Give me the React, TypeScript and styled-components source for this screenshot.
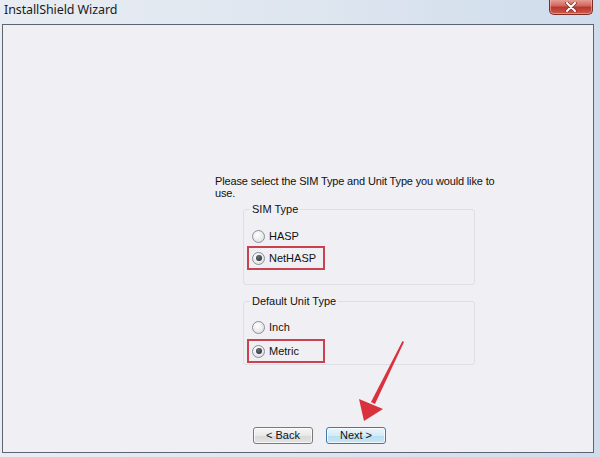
import React from "react";
import styled, { createGlobalStyle } from "styled-components";

const Global = createGlobalStyle`
  html, body { margin: 0; padding: 0; }
  body { width: 600px; height: 457px; overflow: hidden; background: #dfe6ef; }
`;

const Window = styled.div`
  position: relative;
  width: 600px;
  height: 457px;
  display: flex;
  flex-direction: column;
  background: linear-gradient(90deg, #e9edf3 0%, #dde5ef 55%, #cfdcec 100%);
  box-sizing: border-box;
`;

const TitleBar = styled.div`
  height: 24px;
  flex: none;
  display: flex;
  align-items: flex-start;
  justify-content: space-between;
  padding: 0 7px 0 4px;
  box-sizing: border-box;
`;

const Title = styled.span`
  font-family: "Noto Sans", "Open Sans", sans-serif;
  font-size: 12.5px;
  color: #1b1b1b;
  line-height: 20px;
  letter-spacing: -0.1px;
`;

const CloseButton = styled.div`
  width: 44px;
  height: 16px;
  margin-top: -1px;
  box-sizing: border-box;
  border: 1px solid #7a2e28;
  border-top: none;
  border-radius: 0 0 5px 5px;
  background: linear-gradient(180deg, #e8a69e 0%, #d2675c 45%, #b9372d 55%, #cf5a4c 100%);
  display: flex;
  align-items: center;
  justify-content: center;
  box-shadow: inset 0 0 0 1px rgba(255, 200, 190, 0.5);
`;

const Body = styled.div`
  flex: 1;
  margin: 0 6px 4px 2px;
  border: 1px solid #5d6570;
  background: #f0eff4;
  display: flex;
  flex-direction: column;
  box-sizing: border-box;
  font-family: "Liberation Sans", Arial, sans-serif;
  font-size: 11px;
  color: #111;
`;

const Main = styled.div`
  flex: 1;
  display: flex;
  flex-direction: column;
  padding: 150px 0 0 212px;
`;

const Prompt = styled.p`
  margin: 0 0 4px;
  line-height: 12px;
  letter-spacing: -0.15px;
`;

const Group = styled.fieldset<{ $gap: number; $h: number; $mb: number }>`
  margin: 0 0 ${(p) => p.$mb}px 28px;
  width: 232px;
  box-sizing: border-box;
  border: 1px solid #dcdfe4;
  border-radius: 3px;
  padding: 4px 6px 6px 6px;
  display: flex;
  flex-direction: column;
  gap: ${(p) => p.$gap}px;
  min-height: ${(p) => p.$h}px;
`;

const Legend = styled.legend`
  padding: 0 2px;
  line-height: 13px;
`;

const RadioRow = styled.label<{ $hl?: boolean; $first?: number }>`
  display: flex;
  align-items: center;
  gap: 4px;
  width: 68px;
  height: 14px;
  margin-left: 2px;
  margin-top: ${(p) => p.$first ?? 0}px;
  outline: ${(p) => (p.$hl ? "2px solid #c8434f" : "none")};
  outline-offset: 3px;
`;

const Radio = styled.span<{ $on?: boolean }>`
  width: 11px;
  height: 11px;
  border-radius: 50%;
  border: 1px solid #8a8f96;
  background: radial-gradient(circle at 40% 35%, #ffffff 0%, #e3e5e8 70%, #cfd2d6 100%);
  display: flex;
  align-items: center;
  justify-content: center;
  flex: none;
  &::after {
    content: "";
    width: 6px;
    height: 6px;
    border-radius: 50%;
    background: ${(p) => (p.$on ? "radial-gradient(circle at 40% 35%, #6d7278, #1f2226)" : "transparent")};
  }
`;

const Footer = styled.div`
  display: flex;
  justify-content: center;
  gap: 13px;
  padding: 0 0 8px 43px;
`;

const Button = styled.button<{ $default?: boolean }>`
  width: 60px;
  height: 17px;
  padding: 0;
  border-radius: 3px;
  font-family: "Liberation Sans", Arial, sans-serif;
  font-size: 11px;
  color: #111;
  line-height: 15px;
  border: 1px solid ${(p) => (p.$default ? "#3d7aa6" : "#7a7a7a")};
  background: ${(p) =>
    p.$default
      ? "linear-gradient(180deg, #ebf5fb 0%, #d5ebf7 50%, #b9def2 52%, #c8e6f5 100%)"
      : "linear-gradient(180deg, #f6f6f6 0%, #e9e9e9 50%, #d9d9d9 52%, #e3e3e3 100%)"};
  box-shadow: inset 0 0 0 1px rgba(255, 255, 255, 0.7);
`;

const Annotation = styled.svg`
  position: absolute;
  left: 0;
  top: 0;
  pointer-events: none;
`;

export default function App() {
  return (
    <>
      <Global />
      <Window>
        <TitleBar>
          <Title>InstallShield Wizard</Title>
          <CloseButton>
            <svg width="12" height="10" viewBox="0 0 12 10">
              <path d="M2 1 L10 9 M10 1 L2 9" stroke="#7a2e28" strokeWidth="3.4" strokeLinecap="round" />
              <path d="M2 1 L10 9 M10 1 L2 9" stroke="#ffffff" strokeWidth="2" strokeLinecap="round" />
            </svg>
          </CloseButton>
        </TitleBar>
        <Body>
          <Main>
            <Prompt>
              Please select the SIM Type and Unit Type you would like to
              <br />
              use.
            </Prompt>
            <Group $gap={8} $h={82} $mb={10}>
              <Legend>SIM Type</Legend>
              <RadioRow $first={9}>
                <Radio />
                HASP
              </RadioRow>
              <RadioRow $hl>
                <Radio $on />
                NetHASP
              </RadioRow>
            </Group>
            <Group $gap={10} $h={67} $mb={0}>
              <Legend>Default Unit Type</Legend>
              <RadioRow $first={8}>
                <Radio />
                Inch
              </RadioRow>
              <RadioRow $hl>
                <Radio $on />
                Metric
              </RadioRow>
            </Group>
          </Main>
          <Footer>
            <Button>&lt; Back</Button>
            <Button $default>Next &gt;</Button>
          </Footer>
        </Body>
        <Annotation width="600" height="457" viewBox="0 0 600 457">
          <path d="M402.5 341 L404 342 L375 404 L371 402 Z" fill="#d9323d" />
          <path d="M364 421 L359 399 L383 409 Z" fill="#d9323d" />
        </Annotation>
      </Window>
    </>
  );
}
